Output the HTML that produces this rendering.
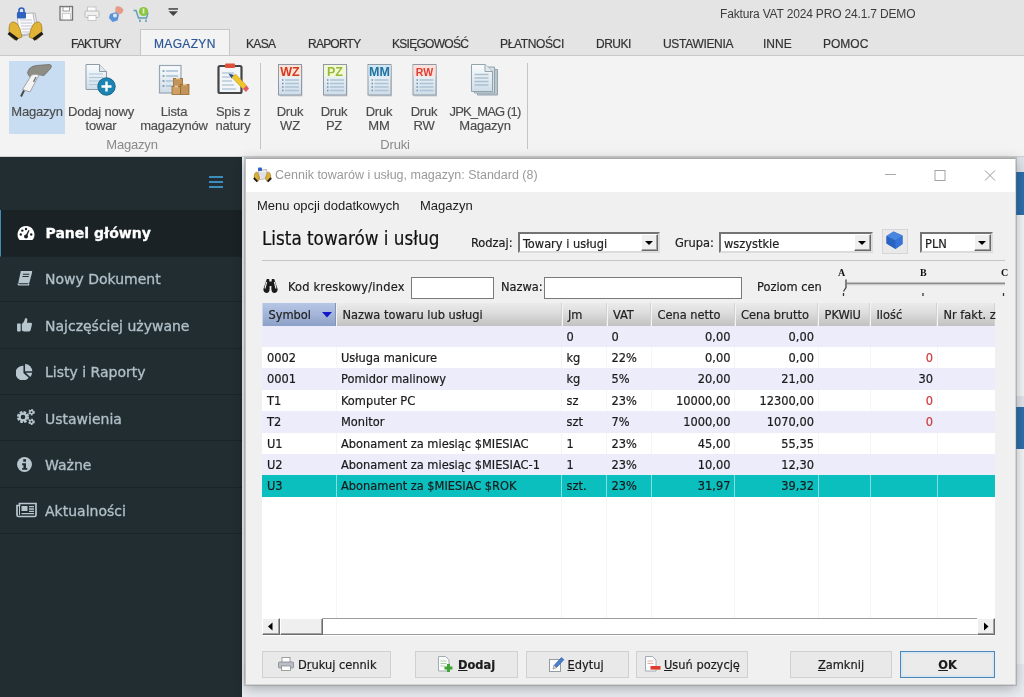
<!DOCTYPE html>
<html lang="pl">
<head>
<meta charset="utf-8">
<title>Faktura VAT 2024 PRO 24.1.7 DEMO</title>
<style>
*{box-sizing:border-box;margin:0;padding:0}
html,body{width:1024px;height:697px;overflow:hidden;background:#eceff4;font-family:"Liberation Sans",sans-serif;color:#222}
.abs{position:absolute}
#app{will-change:transform;position:relative;width:1024px;height:697px;overflow:hidden;background:#ecf0f5}
/* ---------- top title / ribbon ---------- */
#titlebar{left:0;top:0;width:1024px;height:55px;background:#e4e4e4}
#apptitle{left:720px;top:7px;font-size:12px;color:#3c3c3c;white-space:nowrap;letter-spacing:-0.17px}
.tab{top:36.5px;font-size:12px;color:#333;white-space:nowrap;-webkit-text-stroke:0.2px}
#tabactive{left:140px;top:29px;width:90px;height:27px;background:#f3f3f3;border:1px solid #c6c6c6;border-bottom:none}
#ribbon{left:0;top:55px;width:1024px;height:102px;background:#f3f3f3;border-top:1px solid #c9c9c9;border-bottom:1px solid #d0d0d0}
.rbtn{-webkit-text-stroke:0.15px;font-size:13px;color:#4c4c4c;text-align:center;line-height:14px;white-space:nowrap;letter-spacing:-0.2px}
.rgrp{font-size:13px;color:#8a8a8a;letter-spacing:-0.2px}
.rsep{width:1px;background:#c4c4c4;top:63px;height:86px}
/* ---------- sidebar ---------- */
#side{left:0;top:157px;width:242px;height:540px;background:#222d32}
.sitem{left:0;width:242px;-webkit-text-stroke:0.3px;height:46.4px;border-bottom:1px solid #1a2428;font-family:"DejaVu Sans","Liberation Sans",sans-serif;font-size:14px;color:#b1c0c7}
.sitem span{position:absolute;left:45px;top:15.5px;white-space:nowrap}
.sb{background:#efefef;border:1px solid;border-color:#fff #6b6b6b #6b6b6b #fff;box-shadow:inset -1px -1px 0 #a3a3a3}
.sitem svg{position:absolute;left:16px;top:14px}
.sitem.act{height:47.2px;background:#1a2226;border-left:1px solid #3c8dbc;color:#fff;font-weight:bold}
/* ---------- dialog ---------- */
#dlg{-webkit-text-stroke:0.2px;left:245px;top:158px;width:770.5px;height:527px;background:#f0f0f0;box-shadow:0 0 0 1px rgba(120,120,120,.35),0 3px 12px rgba(0,0,0,.30)}
#dlg:after{content:"";position:absolute;left:0;top:0;right:0;bottom:0;border:1px solid #d4d4d4;border-top-color:#a9a9a9;border-left-color:#c4c4c4;pointer-events:none}
#dtitle{left:0;top:0;width:770px;height:34px;background:#fff}
.t{white-space:nowrap;font-size:12.7px;color:#1c1c1c;font-family:"DejaVu Sans Condensed","Liberation Sans",sans-serif;}
.seg{font-family:"Liberation Sans",sans-serif;font-size:13px;-webkit-text-stroke:0}
.sel{height:21px;background:#fff;border:2px solid;border-color:#747474 #dcdcdc #dcdcdc #747474;font-size:12.7px;font-family:"DejaVu Sans Condensed","Liberation Sans",sans-serif;}
.sel i{position:absolute;right:0;top:0;width:17px;height:17px;background:#efefef;border:1px solid;border-color:#fff #6b6b6b #6b6b6b #fff;box-shadow:inset -1px -1px 0 #a3a3a3}
.sel i:after{content:"";position:absolute;left:3px;top:5.5px;border:4px solid transparent;border-top:4.500px solid #000;border-bottom:none}
.sel b{position:absolute;left:3px;top:2px;font-weight:normal;white-space:nowrap}
.inp{background:#fff;border:1px solid #7a7a7a;height:22px}
.btn{top:493px;height:26.5px;background:#e9e9e9;border:1px solid #d0d0d0;font-size:12.7px;font-family:"DejaVu Sans Condensed","Liberation Sans",sans-serif;color:#1c1c1c;text-align:center;line-height:25px;white-space:nowrap}
/* table */
#tbl{left:17px;top:145px;width:733px;height:333px;background:#fff}
.th{top:0;height:23px;font-size:12.7px;font-family:"DejaVu Sans Condensed","Liberation Sans",sans-serif;color:#222;line-height:24px;padding-left:5.5px;white-space:nowrap;background:linear-gradient(#ebebeb,#dcdcdc 45%,#c1c1c1);border-left:1px solid #f4f4f4;border-right:1px solid #d2d2d2}
.row{left:0;width:733px;height:21.6px}
.row.alt{background:#ececfb}
.row.sel2{background:#0bbfbf}
.c{position:absolute;top:0;height:100%;font-size:12.7px;font-family:"DejaVu Sans Condensed","Liberation Sans",sans-serif;line-height:21px;white-space:nowrap;color:#1a1a1a}
.r{text-align:right}
.vl{top:23px;width:1px;height:293px;background:#f5f5f5}
</style>
</head>
<body>
<div id="app">
<div id="titlebar" class="abs"></div>
<!-- app icon -->
<svg class="abs" style="left:0;top:0" width="50" height="46" viewBox="0 0 50 46">
  <path d="M19 15 l16 -2 l4 20 l-17 3z" fill="#e9e9ee" stroke="#a8a8b0" stroke-width=".8"/>
  <path d="M17 14 l16 -1 l3 20 l-17 2z" fill="#fbfbfd" stroke="#a8a8b0" stroke-width=".8"/>
  <path d="M20 20h12M20.500 23h12M21 26h12M21.500 29h12M22 32h11" stroke="#c3c3cf" stroke-width="1"/>
  <rect x="17" y="12" width="9" height="6.500" rx="1" fill="#2f62c0"/>
  <path d="M19 12.500v-2a2.500 2.500 0 0 1 5 0v2" fill="none" stroke="#2f62c0" stroke-width="1.600"/>
  <path d="M9 30 q0 -9 5 -8 q4 1 6 7 l2 8 l-7 3 q-6 -3 -6 -10z" fill="#e2b436" stroke="#9a7614" stroke-width=".7"/>
  <path d="M42 30 q0 -9 -5 -8 q-4 1 -6 7 l-2 8 l7 3 q6 -3 6 -10z" fill="#e2b436" stroke="#9a7614" stroke-width=".7"/>
  <path d="M8.500 33 l9 6.500" stroke="#1c1c1c" stroke-width="3.200"/>
  <path d="M42.500 33 l-9 6.500" stroke="#1c1c1c" stroke-width="3.200"/>
</svg>
<!-- quick access icons -->
<svg class="abs" style="left:58px;top:5px" width="130" height="18" viewBox="0 0 130 18">
  <rect x="2" y="1.500" width="12.500" height="13.500" fill="#f1f1f1" stroke="#737373" stroke-width="1.300"/>
  <rect x="5" y="2" width="6.500" height="4" fill="#fff" stroke="#8a8a8a" stroke-width=".8"/>
  <rect x="4.500" y="8.500" width="8" height="6" fill="#fbfbfb" stroke="#b5b5b5" stroke-width=".6"/>
  <rect x="29.500" y="2" width="8.500" height="4.500" fill="#fcfcfc" stroke="#bdbdbd" stroke-width=".8"/>
  <rect x="27" y="6" width="14" height="6.500" rx="1.200" fill="#f0f0f0" stroke="#b9b9b9"/>
  <rect x="30" y="10.500" width="8" height="5" fill="#fdfdfd" stroke="#bdbdbd" stroke-width=".8"/>
  <path d="M58 1.500 q5 -1 7.500 3.500 q-1 4.500 -6 4.500 q-3.500 -3.500 -1.500 -8z" fill="#e79a86"/>
  <path d="M52 9 l6 -2 l3 3 l-1.500 5.500 l-5 1.500 l-3.500 -4z" fill="#5c93d8"/>
  <circle cx="57" cy="10.500" r="2" fill="#dbe8f8"/>
  <path d="M75.500 5.500 h2.500 l2.500 7.500 h8 l1.500 -5.500" fill="none" stroke="#5b9db5" stroke-width="1.400"/>
  <path d="M82 14.500v2.500M88 14.500v2.500" stroke="#5b9db5" stroke-width="1.500"/>
  <circle cx="85.500" cy="6.500" r="4.600" fill="#8cc63f"/>
  <path d="M85.500 3.500v5" stroke="#dff0c4" stroke-width="1.800"/>
  <rect x="110.500" y="3.200" width="9.500" height="1.500" fill="#444"/>
  <path d="M110.500 6.200 h9.500 l-4.750 4.800z" fill="#444"/>
</svg>
<div id="apptitle" class="abs">Faktura VAT 2024 PRO 24.1.7 DEMO</div>
<div id="tabactive" class="abs"></div>
<div class="abs tab" style="left:71px;letter-spacing:-0.78px">FAKTURY</div>
<div class="abs tab" style="left:154px;color:#2b5797;letter-spacing:0.34px">MAGAZYN</div>
<div class="abs tab" style="left:246px;letter-spacing:-0.66px">KASA</div>
<div class="abs tab" style="left:308px;letter-spacing:-0.77px">RAPORTY</div>
<div class="abs tab" style="left:392px;letter-spacing:-0.72px">KSIĘGOWOŚĆ</div>
<div class="abs tab" style="left:500px;letter-spacing:-0.36px">PŁATNOŚCI</div>
<div class="abs tab" style="left:596px;letter-spacing:-0.51px">DRUKI</div>
<div class="abs tab" style="left:663px;letter-spacing:-0.32px">USTAWIENIA</div>
<div class="abs tab" style="left:763px;letter-spacing:0px">INNE</div>
<div class="abs tab" style="left:823px;letter-spacing:0px">POMOC</div>
<div id="ribbon" class="abs"></div>
<div class="abs" style="left:9px;top:61px;width:56px;height:73px;background:#c9ddf2"></div>
<!-- ribbon icons -->
<svg class="abs" style="left:0;top:60px" width="540" height="42" viewBox="0 0 540 42">
  <defs><linearGradient id="dg" x1="0" y1="0" x2="0" y2="1"><stop offset="0" stop-color="#fafcfd"/><stop offset="1" stop-color="#cfdde8"/></linearGradient></defs>
  <!-- scanner -->
  <path d="M27.500 13 q1 -6.500 9 -7.500 l13 -1 q3 .5 1 4 l-6.500 7 q-8 -2.500 -14.500 1z" fill="#8d8d84" stroke="#6a6a63" stroke-width=".8"/>
  <path d="M31.500 15 q3.500 -1.500 7.500 0 l-9 17 l-7.500 -2.500z" fill="#f4f4f4" stroke="#9a9a9a" stroke-width=".9"/>
  <path d="M36 17 l-2.500 5" stroke="#777" stroke-width="1.500"/>
  <path d="M24 30.500 l-3 6" stroke="#4a4a4a" stroke-width="2"/>
  <!-- doc + plus -->
  <path d="M86 4.500 h13.500 l7 7 v18 h-20.500z" fill="url(#dg)" stroke="#8f9ca8"/>
  <path d="M99.500 4.500 v7 h7" fill="#dfe7ee" stroke="#8f9ca8"/>
  <path d="M89 14h14M89 17.500h14M89 21h14M89 24.500h9" stroke="#a9c6dc" stroke-width="1.200"/>
  <circle cx="106.500" cy="26.500" r="8.700" fill="#1c84b2" stroke="#15688e"/>
  <path d="M106.500 21.500v10M101.500 26.500h10" stroke="#fff" stroke-width="2.400"/>
  <!-- list + boxes -->
  <rect x="159.500" y="5.500" width="21.500" height="27.500" fill="url(#dg)" stroke="#98a5b2" stroke-width="1.200"/>
  <path d="M166 11h12M166 16h12M166 21h7M166 26h7" stroke="#a9bfd2" stroke-width="1.300"/>
  <path d="M162.500 11h2M162.500 16h2M162.500 21h2M162.500 26h2" stroke="#6f8fa8" stroke-width="1.300"/>
  <rect x="173.500" y="18.500" width="9" height="8" fill="#c4935a" stroke="#96692f" stroke-width=".8"/>
  <rect x="172" y="26.500" width="8.500" height="8" fill="#cfa064" stroke="#96692f" stroke-width=".8"/>
  <rect x="180.500" y="24.500" width="8.500" height="10" fill="#c4935a" stroke="#96692f" stroke-width=".8"/>
  <path d="M176 18.500h4M174.500 26.500h3.500M183 24.500h3.500" stroke="#e9cfa4" stroke-width="1.600"/>
  <!-- clipboard + pencil -->
  <rect x="218.500" y="6" width="23" height="27" rx="1.500" fill="#f3f6f8" stroke="#454545" stroke-width="2.200"/>
  <rect x="225" y="3.500" width="10" height="4.500" rx="1" fill="#e04f3a"/>
  <path d="M222 13h12M222 17h8M222 21h10M222 25h12M222 29h14" stroke="#9bb4c8" stroke-width="1.100"/>
  <path d="M228.500 13.500 l5.500 1.500 l-2.500 3.500z" fill="#2e4f8a"/>
  <path d="M232 17.500 l3.500 -3.500 l11 11.500 l-3.500 3.500z" fill="#f0c52c" stroke="#c79a12" stroke-width=".6"/>
  <path d="M243 29 l3.500 -3.500 l2.500 3 l-3 3.500z" fill="#e0586a"/>
  <!-- Druk WZ/PZ/MM/RW -->
  <g font-family="Liberation Sans, sans-serif" font-weight="bold" text-anchor="middle">
    <rect x="279.5" y="6" width="23" height="30.500" fill="#c9ced3"/>
    <rect x="278.5" y="4.500" width="23" height="30.500" fill="url(#dg)" stroke="#8d9aa6"/>
    <rect x="279" y="5" width="22" height="11.500" fill="#fbe3d6"/>
    <path d="M285 20h14M285 23.500h14M285 27h14M285 30.500h14" stroke="#aac3d6" stroke-width="1.300"/>
    <path d="M282 20h1.500M282 23.500h1.500M282 27h1.500M282 30.500h1.500" stroke="#6f8fa8" stroke-width="1.300"/>
    <text x="290" y="15.500" fill="#d23a24" font-size="12.5">WZ</text>
    <rect x="324.5" y="6" width="23" height="30.500" fill="#c9ced3"/>
    <rect x="323.5" y="4.500" width="23" height="30.500" fill="url(#dg)" stroke="#8d9aa6"/>
    <rect x="324" y="5" width="22" height="11.500" fill="#f4f7d8"/>
    <path d="M330 20h14M330 23.500h14M330 27h14M330 30.500h14" stroke="#aac3d6" stroke-width="1.300"/>
    <path d="M327 20h1.500M327 23.500h1.500M327 27h1.500M327 30.500h1.500" stroke="#6f8fa8" stroke-width="1.300"/>
    <text x="335" y="15.500" fill="#94bd3a" font-size="12.5">PZ</text>
    <rect x="369.0" y="6" width="23" height="30.500" fill="#c9ced3"/>
    <rect x="368.0" y="4.500" width="23" height="30.500" fill="url(#dg)" stroke="#8d9aa6"/>
    <rect x="368.5" y="5" width="22" height="11.500" fill="#cfe6f4"/>
    <path d="M374.5 20h14M374.5 23.500h14M374.5 27h14M374.5 30.500h14" stroke="#aac3d6" stroke-width="1.300"/>
    <path d="M371.5 20h1.500M371.5 23.500h1.500M371.5 27h1.500M371.5 30.500h1.500" stroke="#6f8fa8" stroke-width="1.300"/>
    <text x="379.5" y="15.500" fill="#23729f" font-size="12.5">MM</text>
    <rect x="414.0" y="6" width="23" height="30.500" fill="#c9ced3"/>
    <rect x="413.0" y="4.500" width="23" height="30.500" fill="url(#dg)" stroke="#8d9aa6"/>
    <rect x="413.5" y="5" width="22" height="11.500" fill="#fde0da"/>
    <path d="M419.5 20h14M419.5 23.500h14M419.5 27h14M419.5 30.500h14" stroke="#aac3d6" stroke-width="1.300"/>
    <path d="M416.5 20h1.500M416.5 23.500h1.500M416.5 27h1.500M416.5 30.500h1.500" stroke="#6f8fa8" stroke-width="1.300"/>
    <text x="424.5" y="15.500" fill="#dc3e34" font-size="10.5">RW</text>
  </g>
  <!-- JPK docs -->
  <path d="M477.500 9.500 h20 v25.500 h-20z" fill="#b9c6cf" stroke="#93a3ae"/>
  <path d="M474.500 7 h20 v26 h-20z" fill="#d3dde4" stroke="#93a3ae"/>
  <path d="M471.500 4.500 h13.500 l7.500 7 v20 h-21z" fill="url(#dg)" stroke="#93a3ae"/>
  <path d="M485 4.500 v7 h7.500" fill="#e3e9ee" stroke="#93a3ae"/>
  <path d="M474.500 14.500h14M474.500 18h14M474.500 21.500h14M474.500 25h14" stroke="#a9c0d0" stroke-width="1.300"/>
</svg>
<div class="abs rbtn" style="left:9px;top:105px;width:56px">Magazyn</div>
<div class="abs rbtn" style="left:60px;top:105px;width:82px">Dodaj nowy<br>towar</div>
<div class="abs rbtn" style="left:133px;top:105px;width:82px">Lista<br>magazynów</div>
<div class="abs rbtn" style="left:206px;top:105px;width:54px">Spis z<br>natury</div>
<div class="abs rbtn" style="left:268px;top:105px;width:44px">Druk<br>WZ</div>
<div class="abs rbtn" style="left:312px;top:105px;width:44px">Druk<br>PZ</div>
<div class="abs rbtn" style="left:357px;top:105px;width:44px">Druk<br>MM</div>
<div class="abs rbtn" style="left:402px;top:105px;width:44px">Druk<br>RW</div>
<div class="abs rbtn" style="left:440px;top:105px;width:90px"><span style="letter-spacing:-0.85px">JPK_MAG (1)</span><br>Magazyn</div>
<div class="abs rgrp" style="left:92px;top:137px;width:80px;text-align:center">Magazyn</div>
<div class="abs rgrp" style="left:355px;top:137px;width:80px;text-align:center">Druki</div>
<div class="abs rsep" style="left:260px"></div>
<div class="abs rsep" style="left:527px"></div>

<div id="side" class="abs">
  <svg class="abs" style="left:209px;top:19px" width="14" height="12" viewBox="0 0 14 12"><path d="M0 1h14M0 6h14M0 11h14" stroke="#3c8dbc" stroke-width="2"/></svg>
  <div class="abs sitem act" style="top:52.5px"><svg width="18" height="16" viewBox="0 0 18 16" style="left:15.5px;top:15px"><path d="M9 1a8.500 8.500 0 0 0 -7.500 12.500 q.5 1.500 2 1.500 h11 q1.500 0 2 -1.500 A8.500 8.500 0 0 0 9 1z" fill="#fff"/><g fill="#1a2226"><circle cx="3.800" cy="9.500" r="1.200"/><circle cx="5.300" cy="5.600" r="1.200"/><circle cx="9" cy="4" r="1.200"/><circle cx="14.200" cy="9.500" r="1.200"/><circle cx="9" cy="11.500" r="2"/><path d="M8.300 11 l3.200 -6 l1 .5 l-2.700 6.200z"/></g></svg><span style="left:44.5px">Panel główny</span></div>
  <div class="abs sitem" style="top:98.9px"><svg width="17" height="17" viewBox="0 0 16 16"><path d="M4.500 1h10q1 0 .7 1l-2.500 9.500q-.3 1-1.300 1H3.200q-1.200 0-.9-1.200L4 3.500" fill="#b8c7ce"/><path d="M2.200 12.500q-.3 1.500 1.200 1.500h8.300l.4-1.200" fill="none" stroke="#b8c7ce" stroke-width="1.400"/><path d="M6.500 4h6M6 6.200h6" stroke="#222d32" stroke-width="1"/></svg><span>Nowy Dokument</span></div>
  <div class="abs sitem" style="top:145.3px"><svg width="17" height="17" viewBox="0 0 16 16"><rect x="1" y="7" width="3.400" height="7.500" rx=".6" fill="#b8c7ce"/><path d="M5.500 7.500q2-1.500 2.500-3.500.3-2.200 1.500-2.200 1.500.3 1.200 2.500l-.5 2h3.800q1.300.2 1 1.600l-1.200 5.300q-.3 1.300-1.600 1.300H7.500l-2-.8z" fill="#b8c7ce"/></svg><span>Najczęściej używane</span></div>
  <div class="abs sitem" style="top:191.7px"><svg width="17" height="17" viewBox="0 0 16 16"><path d="M7 2.500v6.800l5 4.600A7 7 0 1 1 7 2.500z" fill="#b8c7ce"/><path d="M8.500 1a6.800 6.800 0 0 1 6.800 6.800H8.500z" fill="#b8c7ce"/><path d="M9.200 9.200h6a6.800 6.800 0 0 1-1.800 4z" fill="#b8c7ce"/></svg><span>Listy i Raporty</span></div>
  <div class="abs sitem" style="top:238.1px"><svg width="20" height="18" viewBox="0 0 20 18" style="top:13px"><circle cx="7" cy="9" r="4.600" fill="none" stroke="#b8c7ce" stroke-width="3" stroke-dasharray="2.400 1.210"/><circle cx="7" cy="9" r="3.400" fill="none" stroke="#b8c7ce" stroke-width="2.200"/><circle cx="15.500" cy="4.200" r="2.300" fill="none" stroke="#b8c7ce" stroke-width="1.900" stroke-dasharray="1.400 1"/><circle cx="15.500" cy="4.200" r="1.700" fill="none" stroke="#b8c7ce" stroke-width="1.300"/><circle cx="15.500" cy="13.800" r="2.300" fill="none" stroke="#b8c7ce" stroke-width="1.900" stroke-dasharray="1.400 1"/><circle cx="15.500" cy="13.800" r="1.700" fill="none" stroke="#b8c7ce" stroke-width="1.300"/></svg><span>Ustawienia</span></div>
  <div class="abs sitem" style="top:284.5px"><svg width="17" height="17" viewBox="0 0 16 16"><circle cx="8" cy="8" r="7" fill="#b8c7ce"/><rect x="6.800" y="3" width="2.600" height="2.400" fill="#222d32"/><path d="M5.800 6.800h3.600v4.400h1.200v1.800H5.800v-1.800H7V8.600H5.800z" fill="#222d32"/></svg><span>Ważne</span></div>
  <div class="abs sitem" style="top:330.9px"><svg width="21" height="16" viewBox="0 0 21 16"><path d="M3.500 1.500h16.500v11.500q0 1.500-1.500 1.500H2.500q-1.500 0-1.500-1.500V3.500h2.500z" fill="none" stroke="#b8c7ce" stroke-width="1.700"/><rect x="5.500" y="4" width="6" height="5" fill="#b8c7ce"/><path d="M13 4.700h5M13 7h5M13 9.300h5M5.500 11.700h12.500" stroke="#b8c7ce" stroke-width="1.300"/><path d="M3.500 3v10" stroke="#b8c7ce" stroke-width="1"/></svg><span>Aktualności</span></div>
</div>

<!-- background strips right of dialog -->
<div class="abs" style="left:1010px;top:157px;width:14px;height:15px;background:#dfe4ea"></div>
<div class="abs" style="left:1010px;top:172px;width:14px;height:43px;background:#2c6fae"></div>
<div class="abs" style="left:1010px;top:215px;width:14px;height:181px;background:#f5f6f8"></div>
<div class="abs" style="left:1010px;top:396px;width:14px;height:11px;background:#e1e6ec"></div>
<div class="abs" style="left:1010px;top:407px;width:14px;height:42px;background:#2c6fae"></div>
<div class="abs" style="left:1010px;top:449px;width:14px;height:215px;background:#f5f6f8"></div>
<div class="abs" style="left:243px;top:664px;width:781px;height:33px;background:#e8ecf1"></div>
<div id="dlg" class="abs">
  <div id="dtitle" class="abs"></div>
  <svg class="abs" style="left:8px;top:8px" width="19" height="17" viewBox="0 0 19 17">
    <path d="M5.500 4.500l8-1 1.500 9-8.500 1z" fill="#f1f1f4" stroke="#a5a5ad" stroke-width=".8"/>
    <path d="M7 7h6M7.300 9h6M7.600 11h6" stroke="#c6c6d2" stroke-width=".8"/>
    <rect x="5" y="1.500" width="4" height="3.500" rx=".8" fill="#2f62c0"/>
    <path d="M1.200 10q.5-4.500 3.300-3.700l2 5.700-1.500 3.500q-4-1-3.800-5.500z" fill="#dcae34" stroke="#8a6a10" stroke-width=".5"/>
    <path d="M17.800 10q-.5-4.500-3.300-3.700l-2 5.700 1.500 3.500q4-1 3.800-5.500z" fill="#dcae34" stroke="#8a6a10" stroke-width=".5"/>
    <path d="M.8 12l3.500 3.500M18.200 12l-3.500 3.500" stroke="#1c1c1c" stroke-width="1.800"/>
  </svg>
  <div class="abs t seg" style="left:30px;top:10px;color:#9a9a9a;font-size:12.500px">Cennik towarów i usług, magazyn: Standard (8)</div>
  <svg class="abs" style="left:630px;top:0" width="140" height="33" viewBox="0 0 140 33">
    <path d="M10 16.500h11" stroke="#a9a9a9" stroke-width="1"/>
    <rect x="60" y="12.500" width="10" height="10" fill="none" stroke="#a3a3a3" stroke-width="1"/>
    <path d="M110 12.500l10 10M120 12.500l-10 10" stroke="#999" stroke-width="1"/>
  </svg>
  <div class="abs t seg" style="left:12px;top:39.5px">Menu opcji dodatkowych</div>
  <div class="abs t seg" style="left:175px;top:39.5px">Magazyn</div>
  <div class="abs t" style="left:17px;top:70px;font-size:18.700px;color:#111">Lista towarów i usług</div>
  <div class="abs t" style="left:226px;top:77px">Rodzaj:</div>
  <div class="abs sel" style="left:273px;top:74px;width:142px"><b>Towary i usługi</b><i></i></div>
  <div class="abs t" style="left:430px;top:77px">Grupa:</div>
  <div class="abs sel" style="left:474px;top:74px;width:154px"><b>wszystkie</b><i></i></div>
  <div class="abs" style="left:637px;top:71px;width:26px;height:25px;background:#e9e9e9;border:1px solid #d6d6d6"></div>
  <svg class="abs" style="left:640px;top:73px" width="20" height="19" viewBox="0 0 20 19">
    <path d="M1.500 5l7-4.500 9 4v8.500l-7 5-9-5.500z" fill="#2f6fd2"/>
    <path d="M1.500 5l9 4.500v8.500l-9-5.500z" fill="#2a62c0"/>
    <path d="M1.500 5l7-4.500 9 4-7 5z" fill="#4a86e0"/>
    <path d="M10.500 9.500l7-5v8.500l-7 5z" fill="#3573d6"/>
  </svg>
  <div class="abs sel" style="left:675px;top:74px;width:73px"><b>PLN</b><i></i></div>
  <div class="abs" style="left:17px;top:102px;width:743px;height:1px;background:#c6c6c6"></div>
  <!-- binoculars -->
  <svg class="abs" style="left:17px;top:119px" width="17" height="18" viewBox="0 0 17 18">
    <path d="M4.800 2h2.400l.6 9.500q-.3 4.500-3.400 4.500-3.200-.4-3-4z" fill="#1b1b1b"/>
    <path d="M12.200 2H9.800l-.6 9.500q.3 4.500 3.400 4.500 3.200-.4 3-4z" fill="#1b1b1b"/>
    <rect x="6.500" y="4.500" width="4" height="4.500" fill="#1b1b1b"/>
    <path d="M4.600 5l-1.600 6.500" stroke="#f0f0f0" stroke-width="1.100"/>
    <path d="M12.400 5l1.600 6.500" stroke="#f0f0f0" stroke-width="1.100"/>
    <path d="M8.500 9.500v4" stroke="#f0f0f0" stroke-width="1.400"/>
  </svg>
  <div class="abs t" style="left:43px;top:121px;letter-spacing:.2px">Kod kreskowy/index</div>
  <div class="abs inp" style="left:166px;top:119px;width:83px"></div>
  <div class="abs t" style="left:256px;top:121px">Nazwa:</div>
  <div class="abs inp" style="left:299px;top:119px;width:198px"></div>
  <div class="abs t" style="left:512px;top:121px">Poziom cen</div>
  <!-- slider -->
  <svg class="abs" style="left:590px;top:106px" width="180" height="36" viewBox="0 0 180 36" font-family="Liberation Serif, serif" font-weight="bold" font-size="10" fill="#111">
    <text x="3" y="12">A</text><text x="85" y="12">B</text><text x="166" y="12">C</text>
    <path d="M12 19.500h158" stroke="#8c8c8c" stroke-width="2"/>
    <path d="M12 21h158" stroke="#d9d9d9" stroke-width="1"/>
    <path d="M11 15.500v8l-2.500 4" fill="none" stroke="#444" stroke-width="1.300"/>
    <path d="M8.500 29v3M88 29v3M168.500 29v3" stroke="#333" stroke-width="1.300"/>
  </svg>
<div id="tbl" class="abs">
<div class="abs th" style="left:0px;width:74px;background:linear-gradient(#b6c6e4,#a3b5d8 50%,#8c9fc6);border-color:#c9d5ea #8093bb #8093bb #c9d5ea">Symbol<svg style="position:absolute;left:59px;top:9px" width="10" height="6" viewBox="0 0 10 6"><path d="M0 0h10L5 5.500z" fill="#1414c8"/></svg></div>
<div class="abs th" style="left:74px;width:225.5px">Nazwa towaru lub usługi</div>
<div class="abs th" style="left:299.5px;width:45.0px">Jm</div>
<div class="abs th" style="left:344.5px;width:44.5px">VAT</div>
<div class="abs th" style="left:389px;width:83.5px">Cena netto</div>
<div class="abs th" style="left:472.5px;width:83.5px">Cena brutto</div>
<div class="abs th" style="left:556px;width:52px">PKWiU</div>
<div class="abs th" style="left:608px;width:67px">Ilość</div>
<div class="abs th" style="left:675px;width:58px">Nr fakt. z</div>
<div class="abs vl" style="left:73.5px"></div>
<div class="abs vl" style="left:299.0px"></div>
<div class="abs vl" style="left:344.0px"></div>
<div class="abs vl" style="left:388.5px"></div>
<div class="abs vl" style="left:472.0px"></div>
<div class="abs vl" style="left:555.5px"></div>
<div class="abs vl" style="left:607.5px"></div>
<div class="abs vl" style="left:674.5px"></div>
<div class="row abs alt" style="top:22.60px"><div class="c" style="left:304.5px">0</div><div class="c" style="left:349.5px">0</div><div class="c r" style="left:389px;width:79.5px">0,00</div><div class="c r" style="left:472.5px;width:79.5px">0,00</div></div>
<div class="row abs" style="top:44.00px"><div class="c" style="left:5px">0002</div><div class="c" style="left:79px">Usługa manicure</div><div class="c" style="left:304.5px">kg</div><div class="c" style="left:349.5px">22%</div><div class="c r" style="left:389px;width:79.5px">0,00</div><div class="c r" style="left:472.5px;width:79.5px">0,00</div><div class="c r" style="left:608px;width:63px;color:#cf3c3c">0</div></div>
<div class="row abs alt" style="top:65.40px"><div class="c" style="left:5px">0001</div><div class="c" style="left:79px">Pomidor malinowy</div><div class="c" style="left:304.5px">kg</div><div class="c" style="left:349.5px">5%</div><div class="c r" style="left:389px;width:79.5px">20,00</div><div class="c r" style="left:472.5px;width:79.5px">21,00</div><div class="c r" style="left:608px;width:63px">30</div></div>
<div class="row abs" style="top:86.80px"><div class="c" style="left:5px">T1</div><div class="c" style="left:79px">Komputer PC</div><div class="c" style="left:304.5px">sz</div><div class="c" style="left:349.5px">23%</div><div class="c r" style="left:389px;width:79.5px">10000,00</div><div class="c r" style="left:472.5px;width:79.5px">12300,00</div><div class="c r" style="left:608px;width:63px;color:#cf3c3c">0</div></div>
<div class="row abs alt" style="top:108.20px"><div class="c" style="left:5px">T2</div><div class="c" style="left:79px">Monitor</div><div class="c" style="left:304.5px">szt</div><div class="c" style="left:349.5px">7%</div><div class="c r" style="left:389px;width:79.5px">1000,00</div><div class="c r" style="left:472.5px;width:79.5px">1070,00</div><div class="c r" style="left:608px;width:63px;color:#cf3c3c">0</div></div>
<div class="row abs" style="top:129.60px"><div class="c" style="left:5px">U1</div><div class="c" style="left:79px">Abonament za miesiąc $MIESIAC</div><div class="c" style="left:304.5px">1</div><div class="c" style="left:349.5px">23%</div><div class="c r" style="left:389px;width:79.5px">45,00</div><div class="c r" style="left:472.5px;width:79.5px">55,35</div></div>
<div class="row abs alt" style="top:151.00px"><div class="c" style="left:5px">U2</div><div class="c" style="left:79px">Abonament za miesiąc $MIESIAC-1</div><div class="c" style="left:304.5px">1</div><div class="c" style="left:349.5px">23%</div><div class="c r" style="left:389px;width:79.5px">10,00</div><div class="c r" style="left:472.5px;width:79.5px">12,30</div></div>
<div class="row abs sel2" style="top:172.40px"><div class="c" style="left:5px">U3</div><div class="c" style="left:79px">Abonament za $MIESIAC $ROK</div><div class="c" style="left:304.5px">szt.</div><div class="c" style="left:349.5px">23%</div><div class="c r" style="left:389px;width:79.5px">31,97</div><div class="c r" style="left:472.5px;width:79.5px">39,32</div></div>
<div class="abs" style="left:73.5px;top:172.40px;width:1px;height:21.4px;background:#7fe0e0"></div>
<div class="abs" style="left:299.0px;top:172.40px;width:1px;height:21.4px;background:#7fe0e0"></div>
<div class="abs" style="left:344.0px;top:172.40px;width:1px;height:21.4px;background:#7fe0e0"></div>
<div class="abs" style="left:388.5px;top:172.40px;width:1px;height:21.4px;background:#7fe0e0"></div>
<div class="abs" style="left:472.0px;top:172.40px;width:1px;height:21.4px;background:#7fe0e0"></div>
<div class="abs" style="left:555.5px;top:172.40px;width:1px;height:21.4px;background:#7fe0e0"></div>
<div class="abs" style="left:607.5px;top:172.40px;width:1px;height:21.4px;background:#7fe0e0"></div>
<div class="abs" style="left:674.5px;top:172.40px;width:1px;height:21.4px;background:#7fe0e0"></div>
<div class="abs" style="left:0;top:315px;width:733px;height:17px;background:#fff;border-top:1px solid #9c9c9c;border-bottom:1px solid #9c9c9c"></div>
<div class="abs sb" style="left:0;top:315px;width:18px;height:17px"><svg width="16" height="15" viewBox="0 0 16 15"><path d="M9.500 3.500v8l-4.500-4z" fill="#000"/></svg></div>
<div class="abs sb" style="left:18px;top:315px;width:43px;height:17px"></div>
<div class="abs sb" style="left:715px;top:315px;width:18px;height:17px"><svg width="16" height="15" viewBox="0 0 16 15"><path d="M6 3.500v8l4.500-4z" fill="#000"/></svg></div>
</div>
  <div class="abs btn" style="left:17px;width:129px"><svg style="position:absolute;left:15px;top:5px" width="16" height="14" viewBox="0 0 16 14"><rect x="4" y="0.500" width="8" height="5" fill="#fff" stroke="#8a8a8a" stroke-width=".8"/><rect x=".5" y="5" width="15" height="6" rx="1" fill="#b9bec6" stroke="#7d838c" stroke-width=".8"/><rect x="3.500" y="9" width="9" height="4.500" fill="#fff" stroke="#8a8a8a" stroke-width=".8"/></svg><span style="position:absolute;left:35px;top:0">D<u>r</u>ukuj cennik</span></div>
  <div class="abs btn" style="left:170px;width:103px"><svg style="position:absolute;left:21px;top:4px" width="17" height="17" viewBox="0 0 17 17"><path d="M1.500.5h7l3.500 3.500v11h-10.500z" fill="#fdfdfd" stroke="#9aa3ab" stroke-width=".9"/><path d="M3.500 5h6M3.500 7.500h6M3.500 10h4" stroke="#a9cfa0" stroke-width="1"/><path d="M11.500 8v8M7.500 12h8" stroke="#3fa535" stroke-width="3"/></svg><span style="position:absolute;left:42px;top:0;font-weight:bold"><u>D</u>odaj</span></div>
  <div class="abs btn" style="left:280.5px;width:103px"><svg style="position:absolute;left:21px;top:4px" width="17" height="17" viewBox="0 0 17 17"><rect x="1.500" y="3.500" width="11" height="12" fill="#fdfdfd" stroke="#8a939b" stroke-width=".9"/><path d="M5 13l1-3.500 7.500-8 2.300 2.200-7.500 8z" fill="#4a7fd0" stroke="#2f5aa5" stroke-width=".7"/><path d="M5 13l1-3.500 2.500 2.500z" fill="#f0d8a0"/></svg><span style="position:absolute;left:41px;top:0"><u>E</u>dytuj</span></div>
  <div class="abs btn" style="left:391px;width:111.5px"><svg style="position:absolute;left:7px;top:4px" width="17" height="17" viewBox="0 0 17 17"><path d="M1.500.5h7l3.500 3.500v11h-10.500z" fill="#fdfdfd" stroke="#9aa3ab" stroke-width=".9"/><path d="M3.500 5h6M3.500 7.500h6" stroke="#e0b0a8" stroke-width="1"/><rect x="6.500" y="10" width="10" height="3.600" fill="#e03a2a"/></svg><span style="position:absolute;left:27px;top:0"><u>U</u>suń pozycję</span></div>
  <div class="abs btn" style="left:545px;width:102px"><u>Z</u>amknij</div>
  <div class="abs btn" style="left:655px;width:95px;border:1px solid #4f86b6;box-shadow:inset 0 0 0 1.500px #d2e6f6;font-weight:bold;background:#ebebeb"><u>O</u>K</div>
</div>

</div>
</body>
</html>
